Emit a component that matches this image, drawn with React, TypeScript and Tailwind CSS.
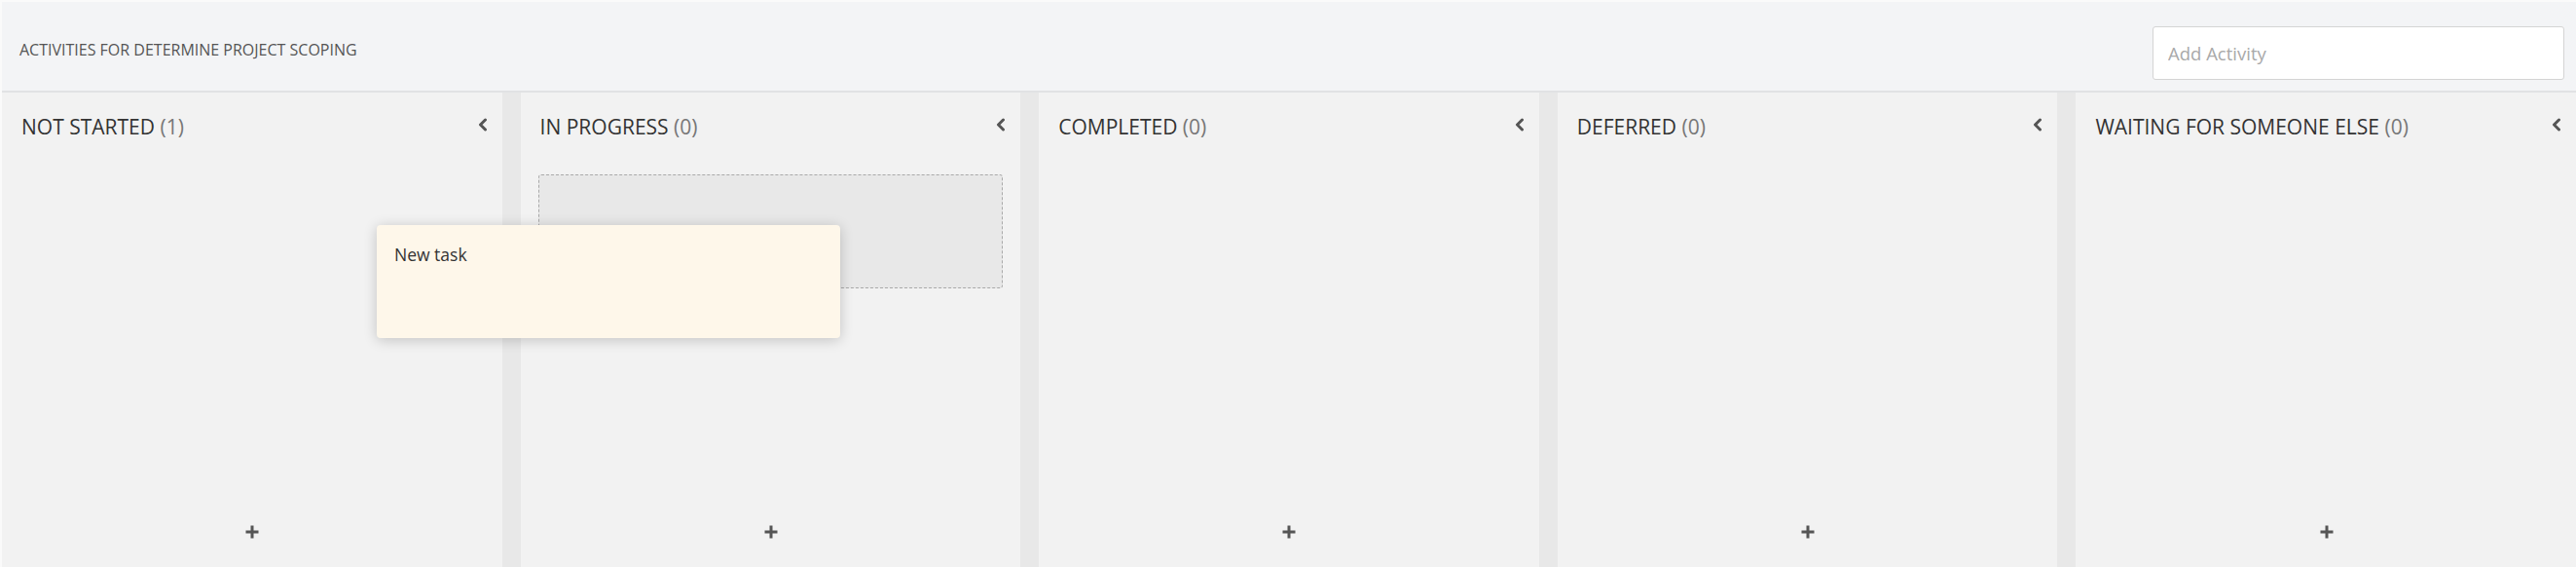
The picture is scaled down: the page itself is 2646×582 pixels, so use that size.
import React from "react";

const columns = [
  { title: "NOT STARTED", count: 1 },
  { title: "IN PROGRESS", count: 0, placeholder: true },
  { title: "COMPLETED", count: 0 },
  { title: "DEFERRED", count: 0 },
  { title: "WAITING FOR SOMEONE ELSE", count: 0 },
];

function Chevron() {
  return (
    <svg width="10" height="14" viewBox="0 0 10 14" className="shrink-0">
      <polyline
        points="7.5,2 2.5,7 7.5,12"
        fill="none"
        stroke="#555"
        strokeWidth="3"
        strokeLinecap="round"
        strokeLinejoin="round"
      />
    </svg>
  );
}

function Plus() {
  return (
    <svg width="16" height="16" viewBox="0 0 16 16">
      <path d="M8 1.5v13M1.5 8h13" stroke="#555" strokeWidth="3" strokeLinecap="butt" />
    </svg>
  );
}

export default function App() {
  return (
    <div
      className="relative flex h-[582px] w-[2646px] flex-col overflow-hidden border-l-2 border-t-2 border-[#fafafa] bg-[#e8e8e8]"
      style={{ fontFamily: '"Open Sans", "Noto Sans", sans-serif' }}
    >
      <div className="flex h-[93px] shrink-0 items-start justify-between border-b-2 border-[#e1e2e4] bg-[#f3f4f6] pt-[25px] pl-[18px] pr-[12px]">
        <div className="mt-[13px] text-[16px] leading-[22px] text-[#555]">
          ACTIVITIES FOR DETERMINE PROJECT SCOPING
        </div>
        <div className="flex h-[55px] w-[423px] items-center rounded-[3px] border border-[#d4d4d4] bg-white pl-[15px]">
          <input
            className="w-full bg-transparent text-[18.5px] text-[#333] outline-none placeholder:text-[#a9a9a9]"
            placeholder="Add Activity"
          />
        </div>
      </div>
      <div className="flex flex-1 gap-[19px]">
        {columns.map((c) => (
          <div key={c.title} className="flex flex-1 flex-col bg-[#f2f2f2]">
            <div className="flex items-center justify-between pl-[20px] pr-[15px] pt-[21px]">
              <div className="text-[21px] leading-[28px] text-[#333]">
                {c.title} <span className="text-[#777]">({c.count})</span>
              </div>
              <div className="mb-[5px]">
                <Chevron />
              </div>
            </div>
            <div className="flex-1 pt-[35px]">
              {c.placeholder && (
                <div className="mx-[18px] h-[117px] rounded-[3px] border border-dashed border-[#a9a9a9] bg-[#e8e8e8]" />
              )}
            </div>
            <div className="flex h-[72px] items-center justify-center pl-[1px]">
              <Plus />
            </div>
          </div>
        ))}
      </div>
      <div className="absolute left-[385px] top-[229px] h-[116px] w-[476px] rounded-[4px] bg-[#fef7ea] px-[18px] pt-[18px] shadow-[0_2px_14px_rgba(0,0,0,0.2)]">
        <div className="text-[17.5px] leading-[24px] text-[#333]">New task</div>
      </div>
    </div>
  );
}
